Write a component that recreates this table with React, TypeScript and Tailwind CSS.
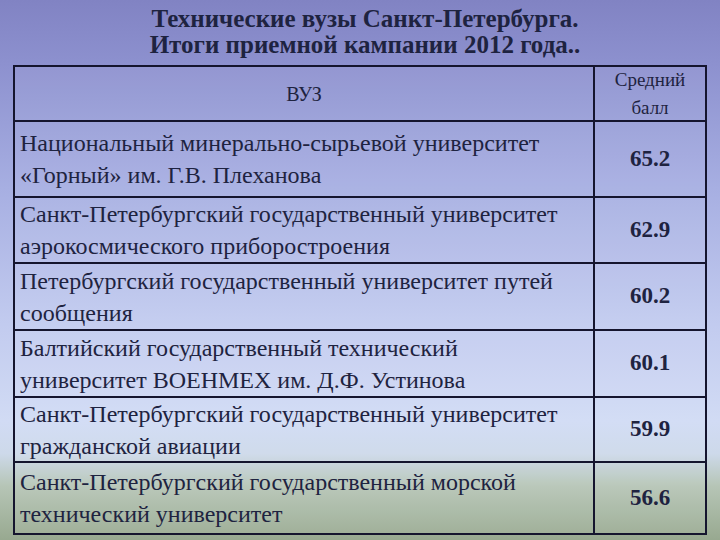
import React from "react";

const rows: { name: [string, string]; score: string; h: string }[] = [
  { name: ["Национальный минерально-сырьевой университет", "«Горный» им. Г.В. Плеханова"], score: "65.2", h: "h-[76px]" },
  { name: ["Санкт-Петербургский государственный университет", "аэрокосмического приборостроения"], score: "62.9", h: "h-[66px]" },
  { name: ["Петербургский государственный университет путей", "сообщения"], score: "60.2", h: "h-[67px]" },
  { name: ["Балтийский государственный технический", "университет ВОЕНМЕХ им. Д.Ф. Устинова"], score: "60.1", h: "h-[67px]" },
  { name: ["Санкт-Петербургский государственный университет", "гражданской авиации"], score: "59.9", h: "h-[65px]" },
  { name: ["Санкт-Петербургский государственный морской", "технический университет"], score: "56.6", h: "h-[70px]" },
];

export default function App() {
  return (
    <div className="w-[720px] h-[540px] overflow-hidden text-[#1e2340] font-['Liberation_Serif','Times_New_Roman',serif] bg-[linear-gradient(to_bottom,#8183c3_0%,#8d91cf_12%,#a7afe2_35%,#c2cbef_60%,#d1dbf4_78%,#cdd9ea_84%,#b6c5b6_90%,#98a990_100%)]">
      <div className="pt-[6px] flex flex-col items-center font-bold text-[25px] leading-[26px]">
        <div className="pl-[10px]">Технические вузы Санкт-Петербурга.</div>
        <div className="pl-[10px]">Итоги приемной кампании 2012 года..</div>
      </div>
      <div className="mt-[7px] ml-[13px] w-[694px] border-2 border-[#15152e] grid grid-cols-[580px_110px] bg-white/5">
        <div className="h-[55px] flex items-center justify-center text-[20px] border-r-2 border-b-2 border-[#15152e]">
          ВУЗ
        </div>
        <div className="h-[55px] flex flex-col items-center justify-center text-[19px] leading-[28px] border-b-2 border-[#15152e]">
          <div>Средний</div>
          <div>балл</div>
        </div>
        {rows.map((r, i) => {
          const last = i === rows.length - 1;
          return (
            <React.Fragment key={i}>
              <div
                className={`${r.h} flex flex-col justify-center pl-[5px] text-[24px] leading-[32px] border-r-2 border-[#15152e] ${last ? "" : "border-b-2"}`}
              >
                <div className="whitespace-nowrap">{r.name[0]}</div>
                <div className="whitespace-nowrap">{r.name[1]}</div>
              </div>
              <div
                className={`${r.h} flex items-center justify-center font-bold text-[23px] border-[#15152e] ${last ? "" : "border-b-2"}`}
              >
                {r.score}
              </div>
            </React.Fragment>
          );
        })}
      </div>
    </div>
  );
}
